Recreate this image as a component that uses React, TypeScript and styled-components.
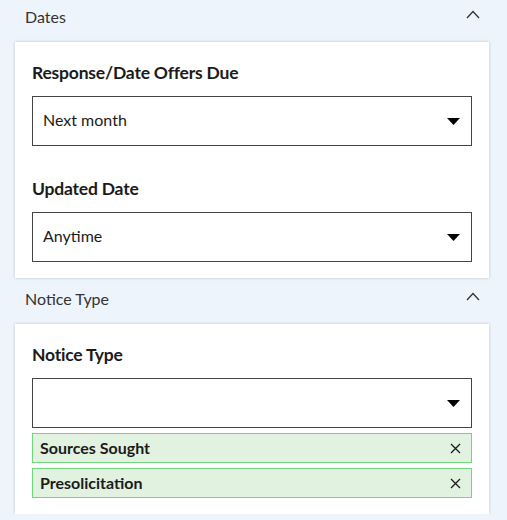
import styled, { createGlobalStyle } from "styled-components";

const GlobalStyle = createGlobalStyle`
  body {
    margin: 0;
    background: #edf4fb;
    font-family: Lato, "Noto Sans", sans-serif;
    color: #1b1b1b;
  }
`;

type Filter = {
  label: string;
  value: string;
};

const dateFilters: Filter[] = [
  { label: "Response/Date Offers Due", value: "Next month" },
  { label: "Updated Date", value: "Anytime" },
];

const noticeTags = ["Sources Sought", "Presolicitation"];

export default function App() {
  return (
    <>
      <GlobalStyle />
      <StyledSidebar>
        <Section title="Dates">
          {dateFilters.map((f) => (
            <StyledField key={f.label}>
              <StyledLabel>{f.label}</StyledLabel>
              <Select value={f.value} />
            </StyledField>
          ))}
        </Section>
        <Section title="Notice Type">
          <StyledField>
            <StyledLabel>Notice Type</StyledLabel>
            <Select value="" />
            <StyledTagList>
              {noticeTags.map((t) => (
                <StyledTag key={t}>
                  <span>{t}</span>
                  <StyledRemove aria-label={`Remove ${t}`}>
                    <svg width="11" height="11" viewBox="0 0 11 11">
                      <path
                        d="M1 1l9 9M10 1l-9 9"
                        stroke="#1b1b1b"
                        strokeWidth="1.3"
                      />
                    </svg>
                  </StyledRemove>
                </StyledTag>
              ))}
            </StyledTagList>
          </StyledField>
        </Section>
      </StyledSidebar>
    </>
  );
}

function Section({ title, children }: { title: string; children: React.ReactNode }) {
  return (
    <section>
      <StyledSectionHeader>
        <span>{title}</span>
        <svg width="14" height="9" viewBox="0 0 14 9">
          <path d="M1 8l6-6.5L13 8" fill="none" stroke="#333" strokeWidth="1.3" />
        </svg>
      </StyledSectionHeader>
      <StyledCard>{children}</StyledCard>
    </section>
  );
}

function Select({ value }: { value: string }) {
  return (
    <StyledSelect>
      <span>{value}</span>
      <svg width="13" height="7" viewBox="0 0 13 7">
        <path d="M0 0h13L6.5 7z" fill="#000" />
      </svg>
    </StyledSelect>
  );
}

const StyledSidebar = styled.div`
  width: 474px;
  padding: 0 18px 0 15px;
  margin-top: -4px;
`;

const StyledSectionHeader = styled.div`
  display: flex;
  align-items: center;
  justify-content: space-between;
  padding: 10px 9px 14px 10px;
  font-size: 16px;
  line-height: 22px;
  color: #333;

  svg {
    margin-top: -6px;
  }
`;

const StyledCard = styled.div`
  background: #fff;
  padding: 19px 17px 16px;
  box-shadow: 0 0 3px rgba(0, 0, 0, 0.2);
  display: flex;
  flex-direction: column;
  gap: 31px;
`;

const StyledField = styled.div`
  display: flex;
  flex-direction: column;
`;

const StyledLabel = styled.label`
  font-size: 17.5px;
  font-weight: 700;
  letter-spacing: -0.2px;
  line-height: 24px;
  color: #1b1b1b;
  margin-bottom: 11px;
`;

const StyledSelect = styled.div`
  height: 50px;
  box-sizing: border-box;
  border: 1px solid #454545;
  display: flex;
  align-items: center;
  justify-content: space-between;
  padding: 0 11px 3px 10px;
  font-size: 16px;
  color: #1b1b1b;

  svg {
    margin-top: 3px;
  }
`;

const StyledTagList = styled.div`
  display: flex;
  flex-direction: column;
  gap: 5px;
  margin-top: 5px;
`;

const StyledTag = styled.div`
  height: 30px;
  box-sizing: border-box;
  border: 1px solid #70d97a;
  background: #e2f2e0;
  display: flex;
  align-items: center;
  justify-content: space-between;
  padding: 0 10px 2px 7px;
  font-size: 16px;
  font-weight: 700;
  color: #1b1b1b;

  button {
    margin-top: 2px;
  }
`;

const StyledRemove = styled.button`
  border: 0;
  background: transparent;
  padding: 0;
  display: flex;
  cursor: pointer;
`;
